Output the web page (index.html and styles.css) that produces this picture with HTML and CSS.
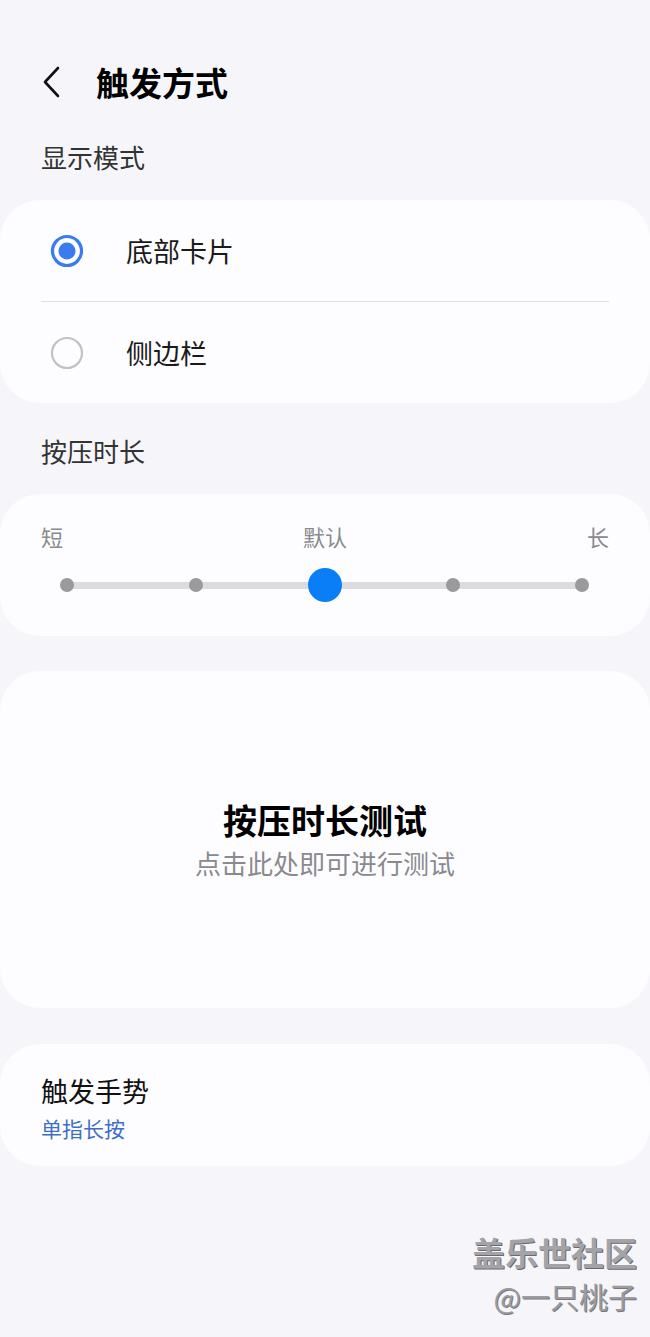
FILE: index.html
```html
<!DOCTYPE html>
<html lang="zh-CN">
<head>
  <meta charset="UTF-8" />
  <meta name="viewport" content="width=device-width, initial-scale=1.0"/>
  <title>触发方式</title>
  <link rel="stylesheet" href="styles.css">
</head>
<body>
  <header class="topbar">
    <button class="back" aria-label="返回">
      <svg width="22" height="34" viewBox="0 0 22 34">
        <path d="M18 3 L5 17 L18 31" fill="none" stroke="#111" stroke-width="2.6" stroke-linecap="round" stroke-linejoin="round"/>
      </svg>
    </button>
    <h1>触发方式</h1>
  </header>

  <div class="group-title">显示模式</div>
  <div class="card">
    <label class="option">
      <svg class="radio" width="34" height="34" viewBox="0 0 34 34">
        <circle cx="17" cy="17" r="14.5" fill="none" stroke="#3a7bf0" stroke-width="3.2"/>
        <circle cx="17" cy="17" r="8.5" fill="#3a7bf0"/>
      </svg>
      <span>底部卡片</span>
    </label>
    <div class="divider"></div>
    <label class="option">
      <svg class="radio" width="34" height="34" viewBox="0 0 34 34">
        <circle cx="17" cy="17" r="15" fill="none" stroke="#c2c2c6" stroke-width="2.2"/>
      </svg>
      <span>侧边栏</span>
    </label>
  </div>

  <div class="group-title">按压时长</div>
  <div class="card slider-card">
    <div class="slider-labels">
      <span>短</span>
      <span>默认</span>
      <span>长</span>
    </div>
    <div class="track">
      <div class="stop"><i class="dot"></i></div>
      <div class="stop"><i class="dot"></i></div>
      <div class="stop"><i class="dot active"></i></div>
      <div class="stop"><i class="dot"></i></div>
      <div class="stop"><i class="dot"></i></div>
    </div>
  </div>

  <div class="card test-card">
    <div class="test-title">按压时长测试</div>
    <div class="test-sub">点击此处即可进行测试</div>
  </div>

  <div class="card gesture-card">
    <div class="gesture-title">触发手势</div>
    <div class="gesture-value">单指长按</div>
  </div>

  <footer class="watermark">
    <div class="wm-main">盖乐世社区</div>
    <div class="wm-user">@一只桃子</div>
  </footer>
</body>
</html>
```

FILE: styles.css
```css
* {
  box-sizing: border-box;
  margin: 0;
  padding: 0;
}

body {
  background-color: #f6f6fa;
  color: #111;
  font-family: "Noto Sans CJK SC", "Noto Sans", sans-serif;
  width: 650px;
  min-height: 1337px;
}

.topbar {
  display: flex;
  align-items: center;
  height: 44px;
  margin-top: 60px;
  padding-left: 40px;
}

.back {
  border: none;
  background: none;
  width: 22px;
  height: 34px;
  display: flex;
  margin-right: 34px;
}

.topbar h1 {
  font-size: 33px;
  font-weight: bold;
  line-height: 44px;
  color: #000;
}

.group-title {
  font-size: 26px;
  line-height: 34px;
  color: #333;
  padding-left: 41px;
  margin-top: 36px;
  margin-bottom: 26px;
}

.card + .group-title {
  margin-top: 31px;
}

.card {
  background: #fdfdff;
  border-radius: 40px;
  width: 650px;
}

.option {
  display: flex;
  align-items: center;
  height: 101px;
  padding-left: 50px;
  gap: 42px;
  font-size: 27px;
  color: #1a1a1a;
}

.divider {
  height: 1px;
  margin: 0 41px;
  background: #dedee2;
}

/* slider */
.slider-card {
  padding: 27px 41px 34px;
}

.slider-labels {
  display: flex;
  justify-content: space-between;
  font-size: 22px;
  line-height: 30px;
  color: #8a8a8e;
}

.track {
  display: flex;
  justify-content: space-between;
  height: 34px;
  margin: 17px 27px 0 26px;
  background: linear-gradient(#dcdce0, #dcdce0) center / 100% 7px no-repeat;
}

.stop {
  width: 0;
  display: flex;
  justify-content: center;
  align-items: center;
}

.dot {
  flex: none;
  width: 14px;
  height: 14px;
  border-radius: 50%;
  background: #9a9a9c;
}

.dot.active {
  width: 34px;
  height: 34px;
  background: #0a7ef6;
}

/* test area */
.test-card {
  height: 337px;
  margin-top: 35px;
  display: flex;
  flex-direction: column;
  align-items: center;
  justify-content: center;
  gap: 4px;
  padding-bottom: 2px;
}

.test-title {
  font-size: 34px;
  font-weight: bold;
  line-height: 44px;
  color: #000;
}

.test-sub {
  font-size: 26px;
  line-height: 34px;
  color: #8a8a8e;
}

/* gesture */
.gesture-card {
  margin-top: 36px;
  padding: 29px 41px 24px;
}

.gesture-title {
  font-size: 27px;
  line-height: 36px;
  color: #111;
}

.gesture-value {
  font-size: 21px;
  line-height: 28px;
  margin-top: 5px;
  color: #3e6ec8;
}

/* watermark */
.watermark {
  margin-top: 64px;
  padding-right: 13px;
  text-align: right;
}

.wm-main {
  font-size: 33px;
  line-height: 44px;
  font-weight: bold;
  color: #a4a4a8;
  text-shadow: 1px 1px 0 #6a6a6e;
}

.wm-user {
  font-size: 29px;
  line-height: 40px;
  margin-top: 2px;
  color: #9c9ca0;
  text-shadow: 1px 1px 0 #7a7a7e;
}
```
